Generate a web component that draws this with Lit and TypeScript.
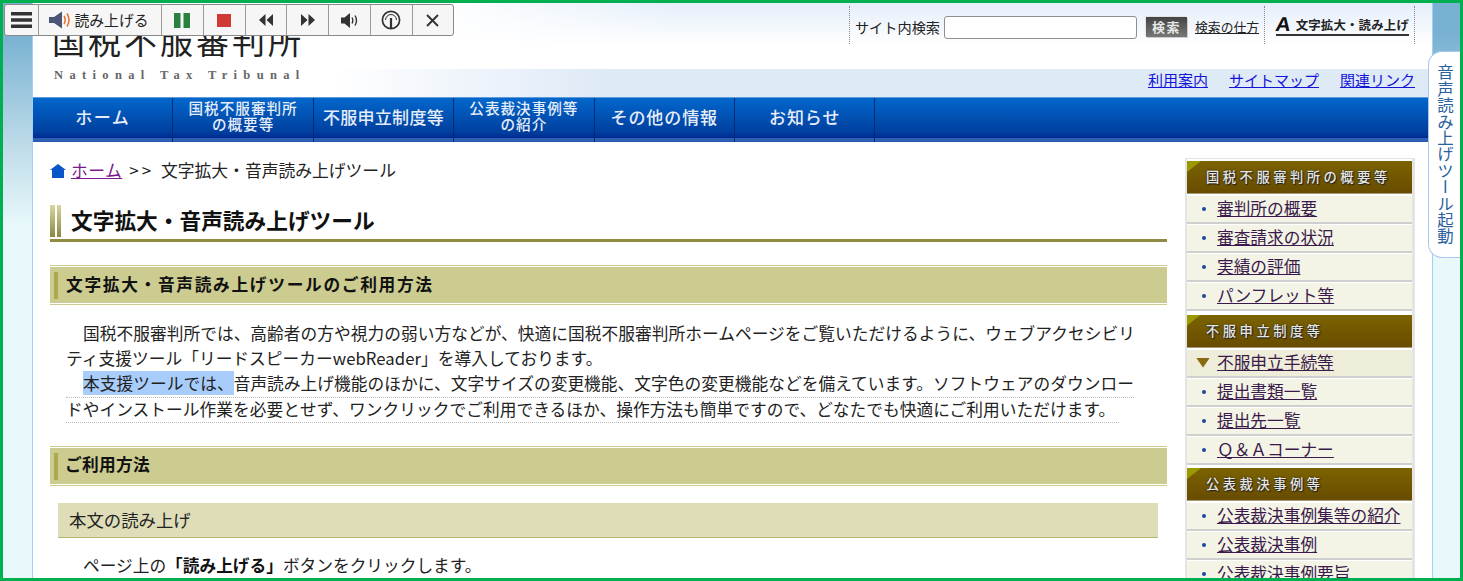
import { LitElement, html, css } from "lit";
import { customElement } from "lit/decorators.js";

const NAV = [
  ["ホーム", "big one"],
  ["国税不服審判所<br>の概要等", "small"],
  ["不服申立制度等", "big"],
  ["公表裁決事例等<br>の紹介", "small"],
  ["その他の情報", "big wide"],
  ["お知らせ", "big wide"],
];

const SIDE: { title: string; items: string[]; current?: number }[] = [
  { title: "国税不服審判所の概要等", items: ["審判所の概要", "審査請求の状況", "実績の評価", "パンフレット等"] },
  { title: "不服申立制度等", items: ["不服申立手続等", "提出書類一覧", "提出先一覧", "Ｑ＆Ａコーナー"], current: 0 },
  { title: "公表裁決事例等", items: ["公表裁決事例集等の紹介", "公表裁決事例", "公表裁決事例要旨"] },
];

@customElement("app-root")
export class AppRoot extends LitElement {
  static styles = css`
    :host {
      display: block;
      position: relative;
      box-sizing: border-box;
      width: 1463px;
      height: 581px;
      border: 3px solid #00b050;
      overflow: hidden;
      font-family: "Noto Sans CJK JP", "Noto Sans", sans-serif;
      font-size: 16.7px;
      color: #222;
      background: #fff;
    }
    * { box-sizing: border-box; }
    a { color: inherit; }
    .page { display: grid; grid-template-columns: 30px 1399px 28px; height: 575px; }
    .strip {
      background: linear-gradient(180deg, #78b1d2 0, #78b1d2 30px, #c2deea 150px, #e9f9fb 225px, #e9f9fb 100%);
    }
    .strip.l { border-right: 1px solid #a6cdf3; }
    .strip.r { border-left: 1px solid #a6cdf3; }
    main { min-width: 0; overflow: hidden; background: #fff; }

    header {
      height: 94px;
      display: flex;
      justify-content: space-between;
      background:
        linear-gradient(90deg, #fff 300px, #dfeaf7 570px) 0 66px / 100% 28px no-repeat,
        linear-gradient(90deg, #fff 400px, rgba(255,255,255,0) 640px) 0 0 / 100% 50px no-repeat,
        linear-gradient(180deg, #e4eefa 0, #fff 42px) 0 0 / 100% 50px no-repeat;
    }
    .brand { padding: 21px 0 0 19px; width: 320px; }
    .brand .jp {
      font-size: 33px; line-height: 33px; letter-spacing: 3px; color: #222; font-weight: 400; white-space: nowrap;
    }
    .brand .en {
      font-family: "Liberation Serif", serif; font-weight: 700; font-size: 12.5px; line-height: 14px;
      letter-spacing: 6.35px; color: #666; margin: 11px 0 0 2px; white-space: nowrap;
    }
    .right { display: flex; flex-direction: column; align-items: flex-end; padding-right: 17px; }
    .tools { display: flex; align-items: center; height: 38px; margin: 3px 0 0 0; font-size: 14.2px; color: #222; }
    .dots { width: 1px; height: 38px; border-left: 1px dotted #888; }
    .tools .lbl { margin: 3px 4px 0 5px; line-height: 20px; white-space: nowrap; }
    .tools input {
      width: 193px; height: 23px; border: 1px solid #8f8f8f; border-radius: 3px; background: #fff; margin-top: 5px; padding: 0;
    }
    .btn {
      width: 41px; height: 20px; margin: 4px 8px 0 9px; background: linear-gradient(180deg, #444, #777); color: #e8e8e8;
      font-size: 13px; line-height: 20px; letter-spacing: 1.5px; text-align: center; box-shadow: 1px 1px 0 #ccc, -1px -1px 0 #e4e4e4; font-weight: 700;
    }
    .how { font-size: 12.8px; line-height: 18px; margin: 3px 5px 0 0; color: #222; white-space: nowrap; }
    .big-a {
      display: flex; align-items: flex-end; gap: 5px; margin: 0 5px 0 11px; height: 22px; border-bottom: 2px solid #333;
      font-size: 12.4px; line-height: 18px; font-weight: 700; letter-spacing: 0.2px; white-space: nowrap; color: #222; padding-bottom: 0;
    }
    .big-a b { font: 700 20px/20px "Liberation Sans", sans-serif; color: #111; transform: skewX(-8deg) scaleX(1.05); }
    .links { display: flex; gap: 21px; font-size: 15px; line-height: 20px; margin-top: 26px; color: #1414d8; }
    .links a { white-space: nowrap; }

    nav {
      height: 45px; display: flex;
      background: linear-gradient(180deg, #0367cc 0, #003f9f 34px, #002b90 40px, #2d5fb5 40px, #2d5fb5 43px, #1c4aa0 45px);
      border-top: 1px solid #5c9ad8;
    }
    nav .it {
      width: 140.4px; height: 44px; border-right: 1px solid #0a2a70; color: #e6edf8; display: flex; align-items: center;
      justify-content: center; text-align: center; padding-bottom: 7px; white-space: nowrap; font-weight: 500;
    }
    nav .big { font-size: 17px; letter-spacing: 0.3px; }
    nav .one { letter-spacing: 1.5px; }
    nav .wide { letter-spacing: 0.9px; }
    nav .small { font-size: 14.6px; line-height: 16px; letter-spacing: 1px; padding-bottom: 9px; }

    .body { display: flex; align-items: flex-start; padding: 0 17px; }
    .content { width: 1117px; flex: none; }
    aside {
      width: 230px; margin: 16px 0 0 18px; flex: none; border-style: solid; border-color: #e4e4e4;
      border-width: 1px 3px 1px 2px; padding: 2px 0 0;
    }
    .grp { margin-bottom: 3.5px; }

    .crumb { display: flex; align-items: center; height: 24px; margin-top: 16px; gap: 5px; line-height: 24px; white-space: nowrap; font-size: 16.8px; }
    .crumb a { color: #7a1a8c; letter-spacing: 0.5px; }
    .crumb svg { flex: none; margin-top: 2px; }
    .crumb .gt { margin: 0 7px; letter-spacing: 3px; }

    h1 {
      margin: 23px 0 0; height: 37px; border-bottom: 3px solid #8f8c42; font-size: 21.7px; line-height: 30px; font-weight: 700; color: #111;
      display: flex; gap: 10px; white-space: nowrap;
    }
    h1 i { width: 11px; height: 32px; display: block; flex: none;
      background:
        linear-gradient(180deg, #d9d7a2, #8a8842) 0 0 / 5px 100% no-repeat,
        linear-gradient(180deg, #d9d7a2, #8a8842) 7px 0 / 4px 100% no-repeat; }
    h2 {
      margin: 0; height: 40px; background: #cccb90; border-top: 1px solid #cccb90; border-bottom: 1px solid #cccb90;
      box-shadow: inset 0 1px 0 #fff, inset 0 -1px 0 #fff; padding: 6px 0 0 4px;
      display: flex; gap: 8px; font-size: 16.7px; line-height: 25px; letter-spacing: 1.7px; font-weight: 700; color: #111;
    }
    h2 i { width: 4px; height: 27px; background: #aaaa4e; flex: none; }
    h2.first { margin-top: 23px; }
    h2.tight { gap: 7px; letter-spacing: 0.3px; margin-top: 24px; line-height: 23px; }
    .para { margin: 16px 0 0 16px; width: 1086px; line-height: 25.2px; letter-spacing: 0.05px; }
    .para .ln { display: block; white-space: nowrap; width: fit-content; }
    .para .ind { padding-left: 17px; }
    .para .rule { border-bottom: 1px dotted #bbb; margin-bottom: -1px; }
    .para .rule2 { width: 1053px; }
    .sel { background: #a8cdfb; display: inline-block; line-height: 24px; height: 24px; }
    h3 {
      margin: 17px 9px 0 8px; height: 35px; background: #deddb8; border-bottom: 1px solid #b6b56c; padding-left: 11px;
      font-size: 17.4px; font-weight: 400; line-height: 34px; color: #222;
    }
    .lead { margin: 15px 0 0 33px; line-height: 25px; white-space: nowrap; }
    .lead b { font-weight: 700; color: #111; }

    .sh {
      height: 33px; position: relative; background: linear-gradient(180deg, #7b6300, #684c00); color: #e6e6e0;
      font-size: 13.3px; line-height: 32px; letter-spacing: 3.5px; padding-left: 19px; border-bottom: 1px solid #a59a78;
      text-shadow: 0 0 2px #222, 1px 1px 1px #222; white-space: nowrap; font-weight: 500; margin-bottom: 1px;
    }
    .sh::before {
      content: ""; position: absolute; left: 0; top: 0; width: 14px; height: 11px; background: #9a9a00;
      clip-path: polygon(0 0, 100% 0, 0 100%);
    }
    .li {
      height: 29px; display: flex; align-items: center; background: #f3f3e6; border-bottom: 2px solid #cfcfcf;
      box-shadow: inset 0 1px 0 #fff; padding-left: 30px; position: relative; line-height: 25px; color: #3a1a4a; white-space: nowrap;
    }
    .li.cur { background: #eeedd9; }
    .li::before {
      content: ""; position: absolute; left: 15px; top: 12px; width: 4px; height: 4px; border-radius: 50%; background: #1a4a9a;
    }
    .li.cur::before {
      left: 9px; top: 9px; width: 14px; height: 10px; border-radius: 0; background: #8a6a10; clip-path: polygon(0 0, 100% 0, 50% 100%);
    }

    .bar {
      position: absolute; left: 1px; top: 1px; height: 32px; display: flex; background: #f6f6f6; border: 1px solid #8a8a8a;
      border-radius: 3px; overflow: hidden;
    }
    .bar .b {
      width: 41.75px; display: flex; align-items: center; justify-content: center; border-left: 1px solid #9a9a9a; flex: none;
    }
    .bar .b:first-child { border-left: 0; width: 33px; }
    .bar .b.read { width: 123px; gap: 4px; font-size: 14.8px; line-height: 20px; color: #222; white-space: nowrap; padding-right: 3px; }

    .tab {
      position: absolute; right: 0; top: 48px; width: 32px; height: 207px; background: #fff; border: 1px solid #a9c8ef;
      border-right: 0; border-radius: 14px 0 0 14px; display: flex; align-items: center; justify-content: center;
      writing-mode: vertical-rl; font-size: 16.4px; line-height: 20px; color: #2a5f9e; white-space: nowrap; padding-left: 2px;
    }
  `;

  private group(g: { title: string; items: string[]; current?: number }) {
    return html`<div class="grp">
      <div class="sh">${g.title}</div>
      ${g.items.map((t, i) => html`<div class="li ${g.current === i ? "cur" : ""}"><a href="#">${t}</a></div>`)}
    </div>`;
  }

  private toolbar() {
    return html`<div class="bar">
      <div class="b">
        <svg width="21" height="16" viewBox="0 0 21 16"><path d="M0 0h21v3.500H0zM0 6.200h21v3.500H0zM0 12.500h21V16H0z" fill="#333"/></svg>
      </div>
      <div class="b read">
        <svg width="22" height="18" viewBox="0 0 22 18"><path d="M0 6h5l8-5.500v17L5 12H0z" fill="#4a5578"/><path d="M15 5q2.400 4 0 8" fill="none" stroke="#e8702a" stroke-width="1.500"/><path d="M18 2.500q4 6.500 0 13" fill="none" stroke="#e8702a" stroke-width="1.500"/></svg>
        <span>読み上げる</span>
      </div>
      <div class="b"><svg width="16" height="15" viewBox="0 0 16 15"><path d="M0 0h6.500v15H0zM9.500 0H16v15H9.500z" fill="#2a8040"/></svg></div>
      <div class="b"><svg width="14" height="13" viewBox="0 0 14 13"><rect width="14" height="13" fill="#d03a34"/></svg></div>
      <div class="b"><svg width="14" height="12" viewBox="0 0 14 12"><path d="M6.500 0v12L0 6zM14 0v12L7.500 6z" fill="#333"/></svg></div>
      <div class="b"><svg width="14" height="12" viewBox="0 0 14 12"><path d="M0 0v12l6.500-6zM7.500 0v12L14 6z" fill="#333"/></svg></div>
      <div class="b"><svg width="17" height="15" viewBox="0 0 17 15"><path d="M0 4.500h3.500L9 0v15L3.500 10.500H0z" fill="#333"/><path d="M11 4.500q1.700 3 0 6M14 2.500q3 5 0 10" fill="none" stroke="#333" stroke-width="1.400"/></svg></div>
      <div class="b"><svg width="20" height="20" viewBox="0 0 20 20"><circle cx="10" cy="10" r="8.600" fill="none" stroke="#333" stroke-width="1.700"/><path d="M10 8v10" stroke="#333" stroke-width="2.200"/><path d="M4.500 10a5.500 5.500 0 0 1 11 0" fill="none" stroke="#333" stroke-width="1"/></svg></div>
      <div class="b"><svg width="13" height="13" viewBox="0 0 13 13"><path d="M1 1l11 11M12 1L1 12" stroke="#333" stroke-width="1.900"/></svg></div>
    </div>`;
  }

  render() {
    return html`
      <div class="page">
        <div class="strip l"></div>
        <main>
          <header>
            <div class="brand">
              <div class="jp">国税不服審判所</div>
              <div class="en">National Tax Tribunal</div>
            </div>
            <div class="right">
              <div class="tools">
                <span class="dots"></span>
                <span class="lbl">サイト内検索</span>
                <input type="text" aria-label="サイト内検索" />
                <span class="btn">検索</span>
                <a class="how" href="#">検索の仕方</a>
                <span class="dots"></span>
                <span class="big-a"><b>A</b>文字拡大・読み上げ</span>
                <span class="dots"></span>
              </div>
              <div class="links">
                <a href="#">利用案内</a><a href="#">サイトマップ</a><a href="#">関連リンク</a>
              </div>
            </div>
          </header>
          <nav>
            ${NAV.map(([t, c]) => html`<div class="it ${c}" .innerHTML=${t}></div>`)}
          </nav>
          <div class="body">
            <div class="content">
              <div class="crumb">
                <svg width="16" height="14" viewBox="0 0 16 14"><path d="M8 0l8 6h-2v8H2V6H0z" fill="#0a55c8"/></svg>
                <span><a href="#">ホーム</a><span class="gt">&gt;&gt;</span>文字拡大・音声読み上げツール</span>
              </div>
              <h1><i></i>文字拡大・音声読み上げツール</h1>
              <h2 class="first"><i></i>文字拡大・音声読み上げツールのご利用方法</h2>
              <div class="para">
                <span class="ln ind">国税不服審判所では、高齢者の方や視力の弱い方などが、快適に国税不服審判所ホームページをご覧いただけるように、ウェブアクセシビリ</span>
                <span class="ln">ティ支援ツール「リードスピーカーwebReader」を導入しております。</span>
                <span class="ln ind rule"><span class="sel">本支援ツールでは、</span>音声読み上げ機能のほかに、文字サイズの変更機能、文字色の変更機能などを備えています。ソフトウェアのダウンロー</span>
                <span class="ln rule rule2">ドやインストール作業を必要とせず、ワンクリックでご利用できるほか、操作方法も簡単ですので、どなたでも快適にご利用いただけます。</span>
              </div>
              <h2 class="tight"><i></i>ご利用方法</h2>
              <h3>本文の読み上げ</h3>
              <div class="lead">ページ上の<b>「読み上げる」</b>ボタンをクリックします。</div>
            </div>
            <aside>${SIDE.map((g) => this.group(g))}</aside>
          </div>
        </main>
        <div class="strip r"></div>
      </div>
      ${this.toolbar()}
      <div class="tab">音声読み上げツール起動</div>
    `;
  }
}
